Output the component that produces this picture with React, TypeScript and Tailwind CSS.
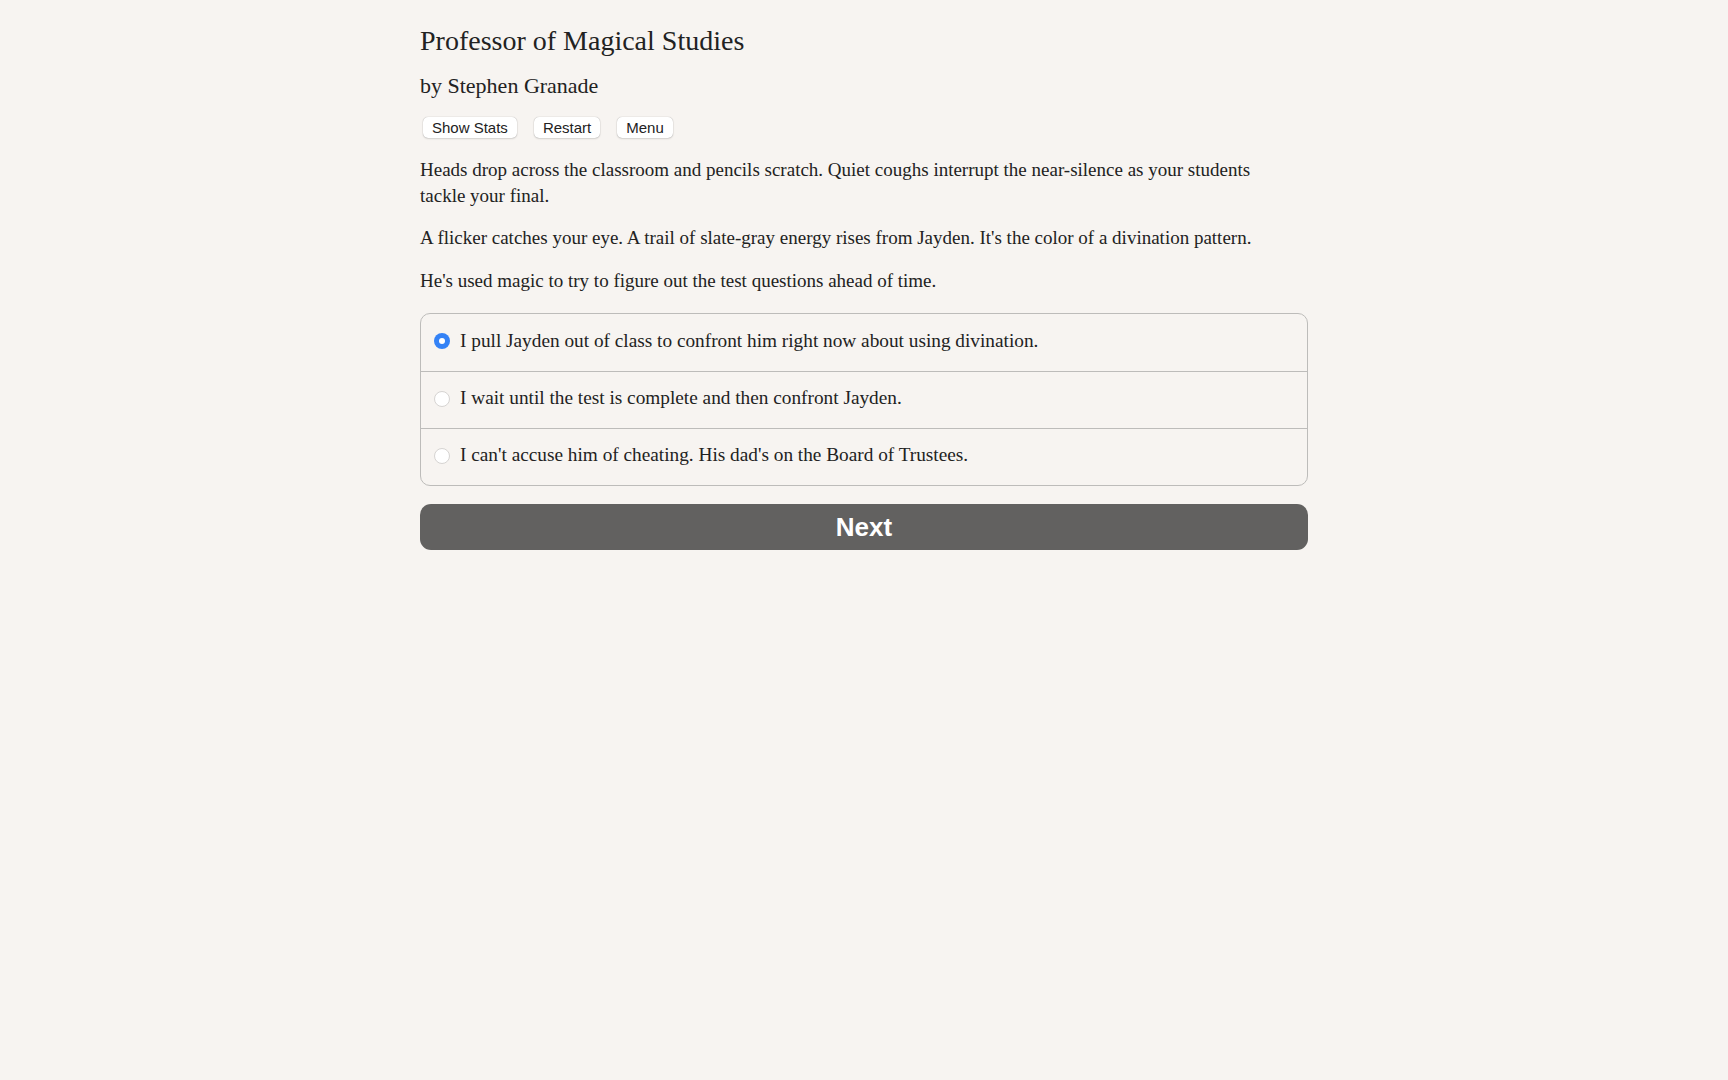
import { useState } from 'react';

const choices = [
    'I pull Jayden out of class to confront him right now about using divination.',
    'I wait until the test is complete and then confront Jayden.',
    "I can't accuse him of cheating. His dad's on the Board of Trustees.",
];

const serif = { fontFamily: '"Liberation Serif", serif' };

export default function App() {
    const [picked, setPicked] = useState(0);

    return (
        <div className="min-h-screen bg-[#f7f4f1] text-[#222]">
            <div className="mx-auto w-[888px] pt-[24px]" style={serif}>
                {/* Header */}
                <h1 className="text-[28px] leading-[34px]">Professor of Magical Studies</h1>
                <h2 className="mt-[15px] text-[22px] leading-[26px]">by Stephen Granade</h2>

                <div className="mt-[18px] flex gap-[17px] pl-[3px] font-['Liberation_Sans',sans-serif]">
                    {['Show Stats', 'Restart', 'Menu'].map((label) => (
                        <button
                            key={label}
                            className="h-[21px] rounded-[5px] bg-white px-[9px] text-[15px] leading-[21px] text-[#222] shadow-[0_0_1px_rgba(0,0,0,0.35),0_1px_2px_rgba(0,0,0,0.12)]"
                        >
                            {label}
                        </button>
                    ))}
                </div>

                {/* Passage */}
                <div className="mt-[19px] flex flex-col gap-[17px] text-[19px] leading-[25.6px]">
                    <p>
                        Heads drop across the classroom and pencils scratch. Quiet coughs interrupt the near-silence as your students
                        <br />
                        tackle your final.
                    </p>
                    <p>A flicker catches your eye. A trail of slate-gray energy rises from Jayden. It's the color of a divination pattern.</p>
                    <p>He's used magic to try to figure out the test questions ahead of time.</p>
                </div>

                {/* Choices */}
                <div className="mt-[20px] overflow-hidden rounded-[10px] border border-[#bdbcba]">
                    {choices.map((text, i) => (
                        <label
                            key={i}
                            onClick={() => setPicked(i)}
                            className={`flex h-[57px] cursor-pointer items-center gap-[10px] px-[13px] pb-[3px] text-[19.3px] ${
                                i > 0 ? 'border-t border-[#bdbcba]' : ''
                            }`}
                        >
                            {picked === i ? (
                                <span className="flex h-[16px] w-[16px] items-center justify-center rounded-full bg-[#3482f6]">
                                    <span className="h-[6px] w-[6px] rounded-full bg-white" />
                                </span>
                            ) : (
                                <span className="h-[16px] w-[16px] rounded-full border border-[#d6d4d2] bg-white" />
                            )}
                            <span>{text}</span>
                        </label>
                    ))}
                </div>

                <button className="mt-[18px] h-[46px] w-full rounded-[11px] bg-[#626160] font-['Liberation_Sans',sans-serif] text-[26px] font-bold text-white">
                    Next
                </button>
            </div>
        </div>
    );
}
